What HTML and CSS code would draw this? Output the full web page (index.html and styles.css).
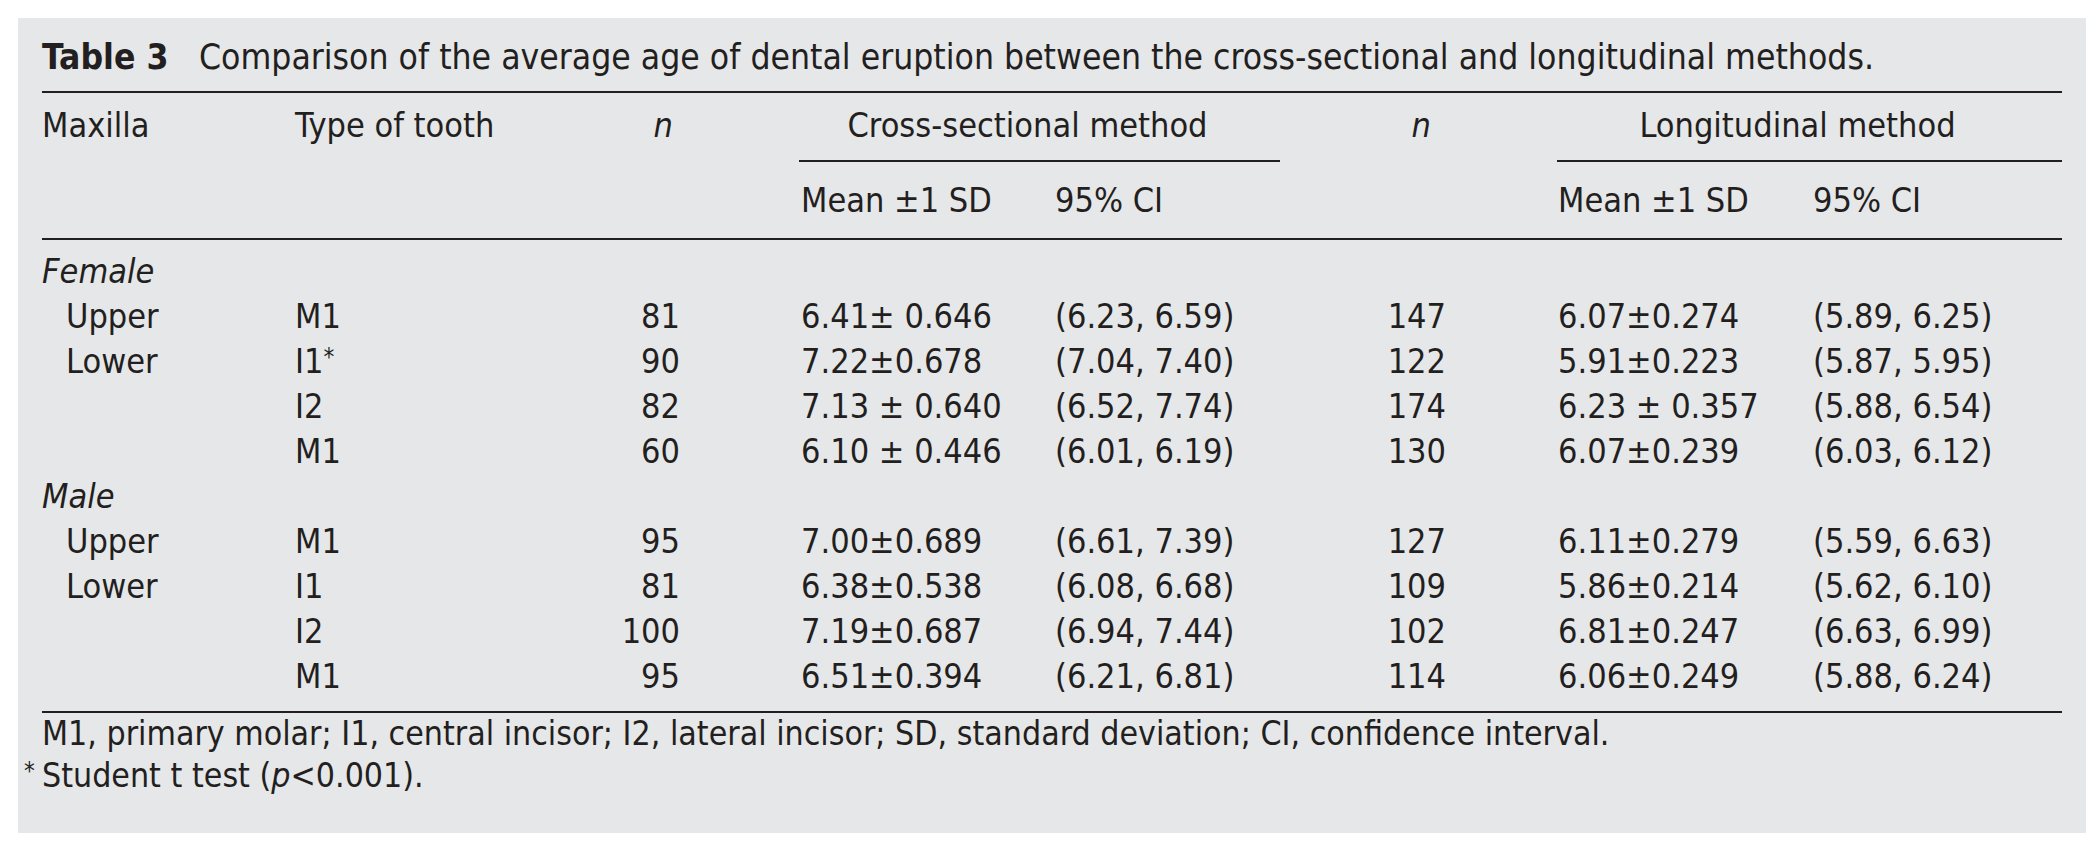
FILE: index.html
```html
<!DOCTYPE html>
<html lang="en">
<head>
<meta charset="utf-8">
<title>Table 3</title>
<link rel="stylesheet" href="styles.css">
</head>
<body>
<div class="sheet">
  <div class="title"><b class="label">Table 3</b><span class="caption">Comparison of the average age of dental eruption between the cross-sectional and longitudinal methods.</span></div>
  <div class="rule"></div>
  <div class="grid">
    <div class="ha">Maxilla</div>
    <div class="ha">Type of tooth</div>
    <div class="ha nhead"><i>n</i></div>
    <div class="ha group g1">Cross-sectional method</div>
    <div class="ha nhead"><i>n</i></div>
    <div class="ha group g2">Longitudinal method</div>

    <div class="subrule g1"></div>
    <div class="subrule g2"></div>

    <div class="hc c4">Mean ±1 SD</div>
    <div class="hc c5">95% CI</div>
    <div class="hc c7">Mean ±1 SD</div>
    <div class="hc c8">95% CI</div>

    <div class="fullrule after-head"></div>

    <div class="sex">Female</div>

    <div class="jaw">Upper</div><div>M1</div><div class="num">81</div><div class="mean">6.41± 0.646</div><div>(6.23, 6.59)</div><div class="num n2">147</div><div class="mean2">6.07±0.274</div><div class="ci2">(5.89, 6.25)</div>
    <div class="jaw">Lower</div><div>I1<span class="star">*</span></div><div class="num">90</div><div class="mean">7.22±0.678</div><div>(7.04, 7.40)</div><div class="num n2">122</div><div class="mean2">5.91±0.223</div><div class="ci2">(5.87, 5.95)</div>
    <div class="jaw"></div><div>I2</div><div class="num">82</div><div class="mean">7.13 ± 0.640</div><div>(6.52, 7.74)</div><div class="num n2">174</div><div class="mean2">6.23 ± 0.357</div><div class="ci2">(5.88, 6.54)</div>
    <div class="jaw"></div><div>M1</div><div class="num">60</div><div class="mean">6.10 ± 0.446</div><div>(6.01, 6.19)</div><div class="num n2">130</div><div class="mean2">6.07±0.239</div><div class="ci2">(6.03, 6.12)</div>

    <div class="sex">Male</div>

    <div class="jaw">Upper</div><div>M1</div><div class="num">95</div><div class="mean">7.00±0.689</div><div>(6.61, 7.39)</div><div class="num n2">127</div><div class="mean2">6.11±0.279</div><div class="ci2">(5.59, 6.63)</div>
    <div class="jaw">Lower</div><div>I1</div><div class="num">81</div><div class="mean">6.38±0.538</div><div>(6.08, 6.68)</div><div class="num n2">109</div><div class="mean2">5.86±0.214</div><div class="ci2">(5.62, 6.10)</div>
    <div class="jaw"></div><div>I2</div><div class="num">100</div><div class="mean">7.19±0.687</div><div>(6.94, 7.44)</div><div class="num n2">102</div><div class="mean2">6.81±0.247</div><div class="ci2">(6.63, 6.99)</div>
    <div class="jaw"></div><div>M1</div><div class="num">95</div><div class="mean">6.51±0.394</div><div>(6.21, 6.81)</div><div class="num n2">114</div><div class="mean2">6.06±0.249</div><div class="ci2">(5.88, 6.24)</div>

    <div class="fullrule after-body"></div>
  </div>
  <p class="note">M1, primary molar; I1, central incisor; I2, lateral incisor; SD, standard deviation; CI, confidence interval.</p>
  <p class="note"><span class="mark">*</span>Student t test (<i>p</i>&lt;0.001).</p>
</div>
</body>
</html>
```

FILE: styles.css
```css
html, body {
  margin: 0;
  padding: 0;
  background: #ffffff;
}

body {
  font-family: "DejaVu Sans Condensed", "DejaVu Sans", sans-serif;
  font-stretch: condensed;
  font-size: 34px;
  color: #231f20;
}

.sheet {
  margin: 18px;
  width: 2068px;
  height: 815px;
  box-sizing: border-box;
  padding: 16px 24px 0 24px;
  background: #e6e7e9;
}

.title {
  font-size: 35.2px;
  line-height: 45px;
  white-space: nowrap;
}

.label {
  display: inline-block;
  width: 157px;
  font-weight: bold;
}

.rule {
  margin-top: 12px;
  height: 2px;
  background: #231f20;
}

.grid {
  display: grid;
  grid-template-columns: 253px 305px 199px 256px 225px 277px 255px 250px;
  line-height: 45px;
  white-space: nowrap;
}

.ha {
  padding: 10px 0 12px 0;
}

.nhead {
  text-align: right;
  padding-right: 126px;
}

.group {
  text-align: center;
  padding-right: 24px;
}

.g1 {
  grid-column: 4 / 6;
}

.g2 {
  grid-column: 7 / 9;
}

.subrule {
  height: 2px;
  background: #231f20;
}

.hc {
  padding: 16px 0 15px 0;
}

.c4 { grid-column: 4; padding-left: 2px; }
.c5 { grid-column: 5; }
.c7 { grid-column: 7; padding-left: 1px; }
.c8 { grid-column: 8; padding-left: 1px; }

.fullrule {
  grid-column: 1 / -1;
  height: 2px;
  background: #231f20;
}

.after-head {
  margin-bottom: 9px;
}

.after-body {
  margin-top: 12px;
}

.sex {
  grid-column: 1 / -1;
  font-style: italic;
}

.jaw {
  padding-left: 24px;
}

.num {
  text-align: right;
  padding-right: 119px;
}

.num.n2 {
  padding-right: 111px;
}

.mean {
  padding-left: 2px;
}

.mean2,
.ci2 {
  padding-left: 1px;
}

.star {
  font-size: 24px;
  line-height: 0;
  vertical-align: 8px;
}

.note {
  margin: 0;
  font-size: 33.6px;
  line-height: 42px;
  white-space: nowrap;
}

.mark {
  display: inline-block;
  width: 18px;
  margin-left: -18px;
  font-size: 24px;
  line-height: 0;
  vertical-align: 8px;
}
```
